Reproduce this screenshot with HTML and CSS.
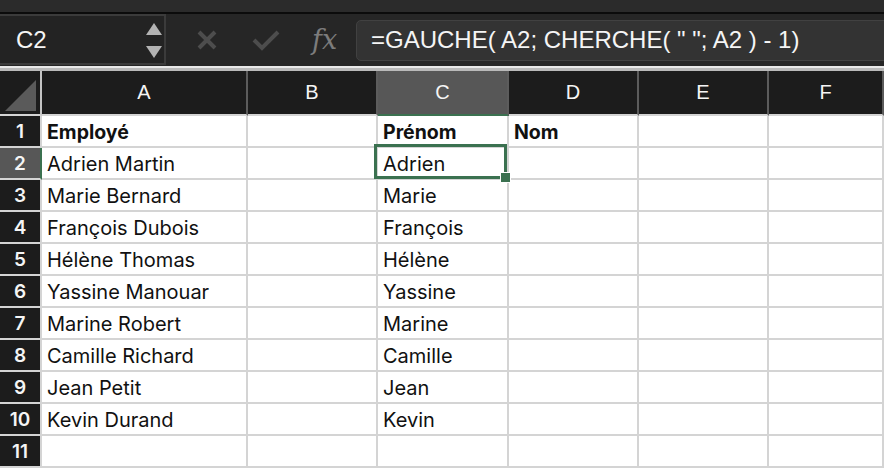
FILE: index.html
```html
<!DOCTYPE html>
<html lang="fr">
<head>
<meta charset="utf-8">
<title>Feuille</title>
<link rel="stylesheet" href="styles.css">
</head>
<body>
<div class="app">
  <div class="titlestrip"></div>
  <div class="toolbar">
    <div class="namebox">
      <span class="ref">C2</span>
      <div class="spin">
        <svg width="16" height="12" viewBox="0 0 16 12"><polygon points="8,0 16,12 0,12" fill="#b3b3b3"/></svg>
        <svg width="16" height="12" viewBox="0 0 16 12"><polygon points="0,0 16,0 8,12" fill="#b3b3b3"/></svg>
      </div>
    </div>
    <svg class="ico-x" width="22" height="22" viewBox="0 0 22 22"><path d="M3 3 L19 19 M19 3 L3 19" stroke="#4d4d4d" stroke-width="4" fill="none"/></svg>
    <svg class="ico-ok" width="28" height="22" viewBox="0 0 28 22"><path d="M2 11 L10 19 L26 3" stroke="#4d4d4d" stroke-width="4" fill="none"/></svg>
    <span class="fx">fx</span>
    <div class="formula">=GAUCHE( A2; CHERCHE( " "; A2 ) - 1)</div>
  </div>
  <div class="sep"></div>
  <div class="sheet">
    <div class="corner"><svg width="31" height="31" viewBox="0 0 31 31"><polygon points="31,0 31,31 0,31" fill="#5a5a5a"/></svg></div>
    <div class="colh">A</div>
    <div class="colh">B</div>
    <div class="colh sel">C</div>
    <div class="colh">D</div>
    <div class="colh">E</div>
    <div class="colh">F</div>

    <div class="rowh">1</div>
    <div class="cell b">Employé</div><div class="cell"></div><div class="cell b">Prénom</div><div class="cell b">Nom</div><div class="cell"></div><div class="cell"></div>

    <div class="rowh sel">2</div>
    <div class="cell">Adrien Martin</div><div class="cell"></div><div class="cell active">Adrien<span class="frame"></span><span class="handle"></span></div><div class="cell"></div><div class="cell"></div><div class="cell"></div>

    <div class="rowh">3</div>
    <div class="cell">Marie Bernard</div><div class="cell"></div><div class="cell">Marie</div><div class="cell"></div><div class="cell"></div><div class="cell"></div>

    <div class="rowh">4</div>
    <div class="cell">François Dubois</div><div class="cell"></div><div class="cell">François</div><div class="cell"></div><div class="cell"></div><div class="cell"></div>

    <div class="rowh">5</div>
    <div class="cell">Hélène Thomas</div><div class="cell"></div><div class="cell">Hélène</div><div class="cell"></div><div class="cell"></div><div class="cell"></div>

    <div class="rowh">6</div>
    <div class="cell">Yassine Manouar</div><div class="cell"></div><div class="cell">Yassine</div><div class="cell"></div><div class="cell"></div><div class="cell"></div>

    <div class="rowh">7</div>
    <div class="cell">Marine Robert</div><div class="cell"></div><div class="cell">Marine</div><div class="cell"></div><div class="cell"></div><div class="cell"></div>

    <div class="rowh">8</div>
    <div class="cell">Camille Richard</div><div class="cell"></div><div class="cell">Camille</div><div class="cell"></div><div class="cell"></div><div class="cell"></div>

    <div class="rowh">9</div>
    <div class="cell">Jean Petit</div><div class="cell"></div><div class="cell">Jean</div><div class="cell"></div><div class="cell"></div><div class="cell"></div>

    <div class="rowh">10</div>
    <div class="cell">Kevin Durand</div><div class="cell"></div><div class="cell">Kevin</div><div class="cell"></div><div class="cell"></div><div class="cell"></div>

    <div class="rowh">11</div>
    <div class="cell"></div><div class="cell"></div><div class="cell"></div><div class="cell"></div><div class="cell"></div><div class="cell"></div>
  </div>
</div>
</body>
</html>
```

FILE: styles.css
```css
* { box-sizing: border-box; }
html, body { margin: 0; padding: 0; background: #262626; }
body { width: 884px; height: 468px; overflow: hidden; font-family: "Liberation Sans", Arial, sans-serif; }

.app { display: flex; flex-direction: column; width: 884px; height: 468px; overflow: hidden; }

.titlestrip { height: 14px; background: #2b2b2b; border-bottom: 2px solid #0b0b0b; flex: none; }

.toolbar {
  height: 52px; flex: none; background: #262626;
  display: flex; align-items: center; overflow: hidden;
}
.namebox {
  align-self: flex-start; flex: none;
  margin-left: -2px; width: 168px; height: 51px;
  border: 2px solid #3b3b3b; background: #232323;
  display: flex; align-items: center; justify-content: space-between;
  padding: 0 2px 0 16px;
}
.ref { color: #f5f5f5; font-size: 24px; }
.spin { display: flex; flex-direction: column; gap: 11px; margin-top: 1px; }
.spin svg { display: block; }

.ico-x { margin-left: 30px; flex: none; }
.ico-ok { margin-left: 34px; flex: none; }
.fx {
  margin-left: 32px; width: 31px; flex: none;
  font-family: "DejaVu Serif", "Liberation Serif", serif; font-style: italic;
  font-size: 27px; color: #7c7c7c; letter-spacing: 0;
  position: relative; top: -1px;
}
.formula {
  margin-left: 13px; flex: none; width: 560px; height: 41px;
  background: #333333; border: 1px solid #414141; border-radius: 5px;
  display: flex; align-items: center; padding-left: 14px;
  color: #f5f5f5; font-size: 24px; white-space: pre;
}

.sep { height: 5px; flex: none; background: linear-gradient(#e9e9e9 0 2px, #b9b9b9 2px 5px); }

.sheet {
  flex: 1;
  display: grid;
  grid-template-columns: 42px 206px 130px 131px 130px 130px 1fr;
  grid-template-rows: 45px repeat(11, 32px);
  background: #ffffff;
}

.corner {
  background: #1c1c1c; border-right: 2px solid #c4c4c4; border-bottom: 2px solid #d4d4d4;
  display: flex; align-items: flex-end; justify-content: flex-end; padding: 0 4px 3px 0;
}
.corner svg { display: block; }

.colh {
  background: #1c1c1c; color: #f5f5f5; font-size: 20px;
  border-right: 2px solid #5c5c5c; border-bottom: 2px solid #d4d4d4;
  display: flex; align-items: center; justify-content: center;
}
.colh.sel { background: #575757; border-bottom-color: #3b7150; }

.rowh {
  background: #1c1c1c; color: #f5f5f5;
  font-family: Inter, "Noto Sans", sans-serif; font-weight: 600; font-size: 19px;
  border-right: 2px solid #d4d4d4; border-bottom: 2px solid #d4d4d4;
  display: flex; align-items: center; justify-content: center;
}
.rowh.sel { background: #575757; border-right-color: #3b7150; }

.cell {
  border-right: 2px solid #d4d4d4; border-bottom: 2px solid #d4d4d4;
  font-family: Inter, "Noto Sans", sans-serif; font-size: 20px; color: #111;
  display: flex; align-items: center; padding-left: 5px; padding-top: 1px;
  white-space: nowrap;
}
.cell.b { font-weight: 700; font-size: 19.5px; }

.cell.active { position: relative; }
.frame {
  position: absolute; left: -4px; top: -4px; right: 0; bottom: -1px;
  border: 3px solid #3b7150;
}
.handle {
  position: absolute; right: -4px; bottom: -5px; width: 11px; height: 11px;
  background: #3b7150; border: 1px solid #ffffff;
}
```
